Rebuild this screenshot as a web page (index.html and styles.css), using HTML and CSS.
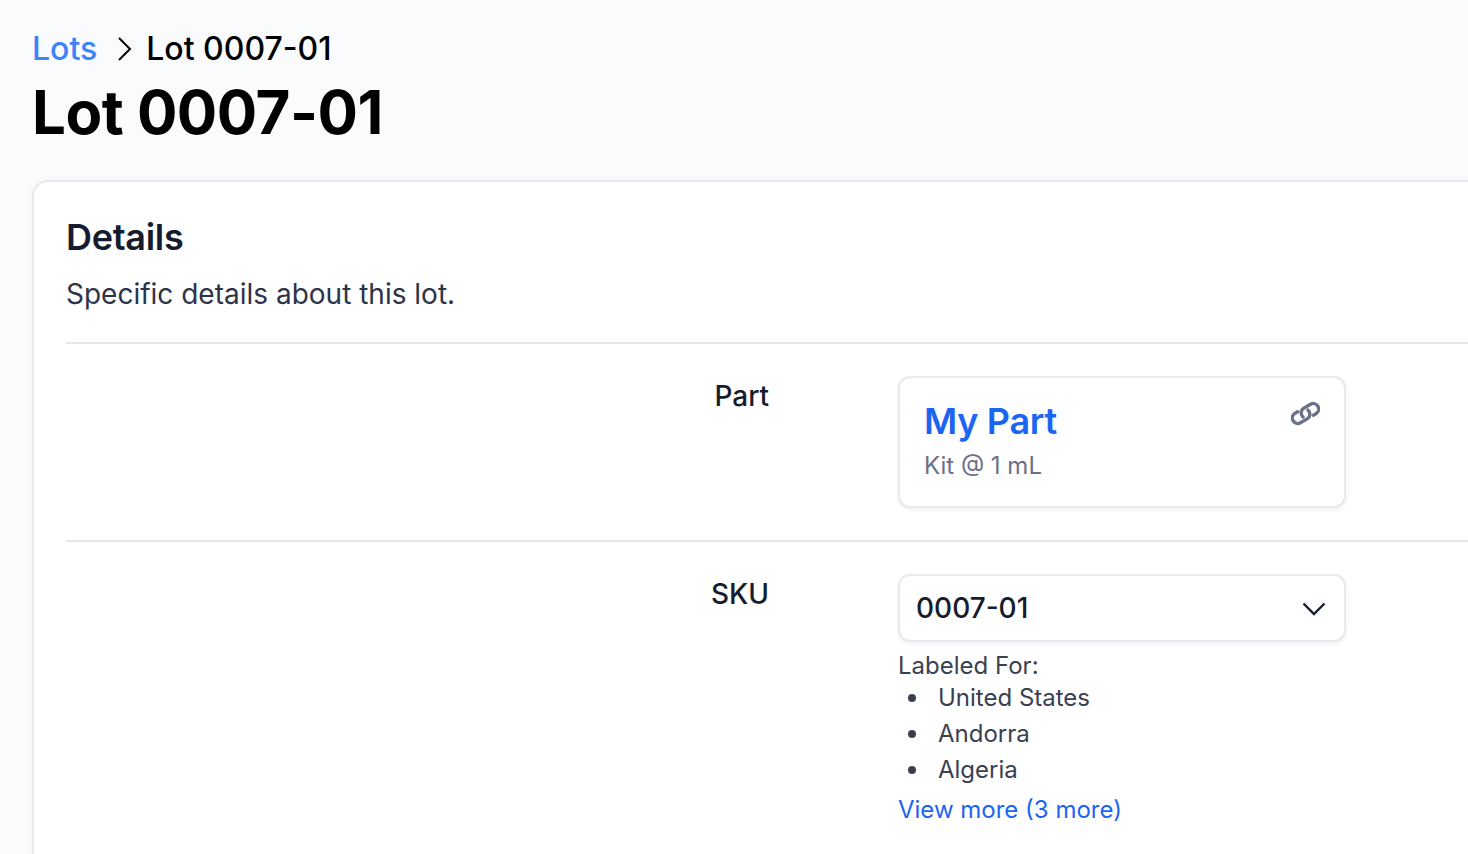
FILE: index.html
```html
<!DOCTYPE html>
<html lang="en">
<head>
<meta charset="utf-8">
<title>Lot 0007-01</title>
<link rel="stylesheet" href="styles.css">
</head>
<body>
<main class="page">
  <nav class="crumbs">
    <a class="crumb-link" href="#">Lots</a>
    <svg class="crumb-sep" viewBox="0 0 16 28" fill="none" stroke="currentColor" stroke-width="2"><path d="M2 3l11 11L2 25"/></svg>
    <span class="crumb-current">Lot 0007-01</span>
  </nav>
  <h1 class="title">Lot 0007-01</h1>
  <section class="card">
    <h2 class="card-title">Details</h2>
    <p class="card-desc">Specific details about this lot.</p>
    <div class="row row-part">
      <div class="label">Part</div>
      <div class="value">
        <div class="part-box">
          <div class="part-text">
            <a class="part-name" href="#">My Part</a>
            <div class="part-sub">Kit @ 1 mL</div>
          </div>
          <svg class="link-icon" viewBox="0 0 24 24" fill="none" stroke="currentColor" stroke-width="2.8" stroke-linecap="round" stroke-linejoin="round">
            <g transform="rotate(15 12 12)">
              <path d="M13.19 8.688a4.5 4.5 0 0 1 1.242 7.244l-4.5 4.5a4.5 4.5 0 0 1-6.364-6.364l1.757-1.757m13.35-.622 1.757-1.757a4.5 4.5 0 0 0-6.364-6.364l-4.5 4.5a4.5 4.5 0 0 0 1.242 7.244"/>
            </g>
          </svg>
        </div>
      </div>
    </div>
    <div class="row row-sku">
      <div class="label">SKU</div>
      <div class="value">
        <div class="select">
          <span>0007-01</span>
          <svg class="chevron" viewBox="0 0 24 14" fill="none" stroke="currentColor" stroke-width="2.4"><path d="M1.500 1.500 12 12 22.500 1.500"/></svg>
        </div>
        <div class="labeled">Labeled For:</div>
        <ul class="countries">
          <li>United States</li>
          <li>Andorra</li>
          <li>Algeria</li>
        </ul>
        <a class="more" href="#">View more (3 more)</a>
      </div>
    </div>
  </section>
</main>
</body>
</html>
```

FILE: styles.css
```css
* { box-sizing: border-box; }
html, body { margin: 0; height: 100%; overflow: hidden; }
body {
  background: #fafbfd;
  font-family: Inter, "Liberation Sans", sans-serif;
  color: #161c30;
}
.page { padding: 29px 0 0 32px; }
.crumbs {
  display: flex;
  align-items: center;
  height: 40px;
  font-size: 32px;
  line-height: 40px;
  color: #000;
}
.crumb-link { color: #3f83f8; text-decoration: none; font-weight: 500; }
.crumb-sep { width: 16px; height: 28px; margin: 0 13px 0 20px; }
.crumb-current { font-weight: 500; }
.title {
  margin: 7px 0 0;
  font-size: 60px;
  line-height: 72px;
  font-weight: 700;
  letter-spacing: -0.5px;
  color: #000;
}
.card {
  margin-top: 32px;
  width: 1500px;
  height: 700px;
  background: #fff;
  border: 2px solid #e8e9ee;
  border-radius: 16px;
  padding: 33px 32px;
  box-shadow: 0 1px 8px rgba(20, 30, 60, .04);
}
.card-title {
  margin: 0;
  font-size: 36px;
  line-height: 44px;
  font-weight: 600;
  letter-spacing: -0.3px;
  color: #161c30;
}
.card-desc {
  margin: 15px 0 0;
  font-size: 28px;
  line-height: 40px;
  color: #2d3348;
}
.row {
  display: grid;
  grid-template-columns: 703px 448px;
  column-gap: 129px;
  border-top: 2px solid #e5e6eb;
  padding-top: 32px;
}
.row-part { margin-top: 28px; height: 198px; }
.label {
  text-align: right;
  font-size: 28px;
  line-height: 40px;
  font-weight: 500;
  color: #161c30;
}
.part-box {
  display: flex;
  justify-content: space-between;
  align-items: flex-start;
  height: 132px;
  border: 2px solid #e8e9ee;
  border-radius: 12px;
  padding: 21px 24px 0;
  box-shadow: 0 2px 4px rgba(20, 30, 60, .06);
  background: #fff;
}
.part-name {
  display: block;
  font-size: 36px;
  line-height: 44px;
  font-weight: 600;
  letter-spacing: -0.3px;
  color: #1c64f2;
  text-decoration: none;
}
.part-sub {
  margin-top: 5px;
  font-size: 24px;
  line-height: 36px;
  color: #6b7089;
}
.link-icon { width: 29px; height: 29px; color: #6b7089; }
.select {
  display: flex;
  justify-content: space-between;
  align-items: center;
  height: 68px;
  border: 2px solid #e8e9ee;
  border-radius: 12px;
  padding: 0 18px 0 16px;
  font-size: 28px;
  font-weight: 500;
  box-shadow: 0 2px 4px rgba(20, 30, 60, .06);
  color: #161c30;
}
.chevron { width: 24px; height: 14px; margin-top: 2px; color: #161c30; }
.labeled {
  margin-top: 8px;
  font-size: 24px;
  line-height: 32px;
  color: #3a4052;
}
.countries {
  margin: -2px 0 0;
  padding: 0 0 0 10px;
  list-style: none;
  font-size: 24px;
  line-height: 36px;
  color: #3a4052;
}
.countries li {
  display: flex;
  align-items: center;
  gap: 22px;
}
.countries li::before {
  content: "";
  width: 8px;
  height: 8px;
  border-radius: 50%;
  background: #3a4052;
}
.more {
  display: block;
  margin-top: 2px;
  font-size: 24px;
  line-height: 40px;
  color: #1c64f2;
  text-decoration: none;
}
```
